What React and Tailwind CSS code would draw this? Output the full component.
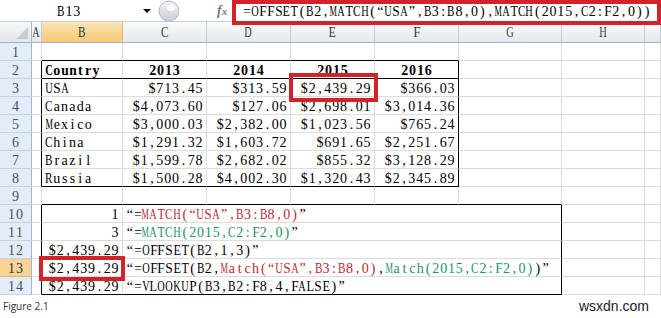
import React from 'react';

const SERIF = '"Liberation Serif", "DejaVu Serif", serif';
const CW = 7.85;

const RED = 'text-[#c0282d]';
const GREEN = 'text-[#23916a]';

// SimSun-like look: serif glyphs on a fixed-width advance, squeezed when too wide
let ctx = null;
function squeeze(ch, bold) {
  if (typeof document === 'undefined') return 1;
  if (!ctx) ctx = document.createElement('canvas').getContext('2d');
  ctx.font = `${bold ? 'bold ' : ''}14px "Liberation Serif"`;
  const w = ctx.measureText(ch).width;
  return w > CW - 0.4 ? (CW - 0.4) / w : 1;
}

function Mono({ text, bold }) {
  return (
    <span className="whitespace-nowrap">
      {Array.from(text).map((ch, i) => {
        const s = squeeze(ch, bold);
        return (
          <span key={i} className="inline-flex justify-center w-[7.85px]">
            <span className="inline-block" style={s < 1 ? { transform: `scaleX(${s})` } : undefined}>
              {ch}
            </span>
          </span>
        );
      })}
    </span>
  );
}

const data = {
  '2-2': { t: 'Country', b: true },
  '2-3': { t: '2013', b: true, a: 'c' },
  '2-4': { t: '2014', b: true, a: 'c' },
  '2-5': { t: '2015', b: true, a: 'c' },
  '2-6': { t: '2016', b: true, a: 'c' },
};

const table = [
  ['USA', '$713.45', '$313.59', '$2,439.29', '$366.03'],
  ['Canada', '$4,073.60', '$127.06', '$2,698.01', '$3,014.36'],
  ['Mexico', '$3,000.03', '$2,382.00', '$1,023.56', '$765.24'],
  ['China', '$1,291.32', '$1,603.72', '$691.65', '$2,251.67'],
  ['Brazil', '$1,599.78', '$2,682.02', '$855.32', '$3,128.29'],
  ['Russia', '$1,500.28', '$4,002.30', '$1,320.43', '$2,345.89'],
];
table.forEach((row, i) => {
  row.forEach((v, j) => {
    data[`${i + 3}-${j + 2}`] = { t: v, a: j === 0 ? 'l' : 'r' };
  });
});

const formulas = {
  10: { v: '1', f: [['“=', ''], ['MATCH(“USA”,B3:B8,0)', RED], ['”', '']] },
  11: { v: '3', f: [['“=', ''], ['MATCH(2015,C2:F2,0)', GREEN], ['”', '']] },
  12: { v: '$2,439.29', f: [['“=OFFSET(B2,1,3)”', '']] },
  13: {
    v: '$2,439.29',
    f: [
      ['“=OFFSET(B2,', ''],
      ['Match(“USA”,B3:B8,0)', RED],
      [',', ''],
      ['Match(2015,C2:F2,0)', GREEN],
      [')”', ''],
    ],
  },
  14: { v: '$2,439.29', f: [['“=VLOOKUP(B3,B2:F8,4,FALSE)”', '']] },
};

const colLetters = ['A', 'B', 'C', 'D', 'E', 'F', 'G', 'H', ''];

function borderClasses(r, c) {
  const rightBlack =
    (r >= 2 && r <= 8 && (c === 1 || c === 6)) || (r >= 10 && r <= 14 && (c === 1 || c === 3));
  const bottomBlack =
    (c >= 2 && c <= 6 && (r === 1 || r === 2 || r === 8)) ||
    (c >= 2 && c <= 7 && r === 9) ||
    ((c === 2 || c === 3) && r === 14);
  return [
    'border-r border-b',
    rightBlack ? 'border-r-black' : 'border-r-[#dadcdd]',
    bottomBlack ? 'border-b-black' : 'border-b-[#dadcdd]',
  ].join(' ');
}

function Cell({ r, c }) {
  const base = `${borderClasses(r, c)} flex items-end overflow-visible whitespace-nowrap text-[14px] leading-[14px] text-black`;
  if (r >= 10 && r <= 14 && c === 2) {
    return (
      <div className={`${base} justify-end pr-[3px]`} style={{ fontFamily: SERIF }}>
        <Mono text={formulas[r].v} />
      </div>
    );
  }
  if (r >= 10 && r <= 14 && c === 3) {
    return (
      <div className={`${base} col-span-5 pl-[3px]`} style={{ fontFamily: SERIF }}>
        {formulas[r].f.map(([t, cls], i) => (
          <span key={i} className={cls}>
            <Mono text={t} />
          </span>
        ))}
      </div>
    );
  }
  const d = data[`${r}-${c}`];
  const align = !d ? '' : d.a === 'c' ? 'justify-center' : d.a === 'r' ? 'justify-end pr-[3px]' : 'pl-[3px]';
  return (
    <div className={`${base} ${align} ${d && d.b ? 'font-bold' : ''}`} style={{ fontFamily: SERIF }}>
      {d ? <Mono text={d.t} bold={d.b} /> : null}
    </div>
  );
}

function FormulaBar() {
  return (
    <div className="h-[22px] flex items-center bg-white border-b border-[#c6ced9]" style={{ fontFamily: SERIF }}>
      <div className="w-[138px] text-center text-[14px] text-black pt-[2px]">
        <Mono text="B13" />
      </div>
      <svg width="10" height="6" viewBox="0 0 10 6" className="ml-[4px]">
        <path d="M1 1 L9 1 L5 5 Z" fill="#111" />
      </svg>
      <svg width="22" height="22" viewBox="0 0 22 22" className="ml-[5px]">
        <defs>
          <linearGradient id="g1" x1="0" y1="0" x2="0" y2="1">
            <stop offset="0" stopColor="#f2f4f6" />
            <stop offset="1" stopColor="#c9ced5" />
          </linearGradient>
        </defs>
        <ellipse cx="12" cy="11" rx="10" ry="10" fill="url(#g1)" stroke="#aeb6c0" strokeWidth="1" />
        <ellipse cx="14" cy="8" rx="4" ry="3" fill="#ffffff" opacity="0.9" />
      </svg>
      <div className="ml-[38px] text-[14px] italic font-bold text-[#7a7a7a] leading-none">
        f<span className="text-[11px]">x</span>
      </div>
      <div className="ml-[16px] text-[14px] text-black pt-[2px]">
        <Mono text="=OFFSET(B2,MATCH(“USA”,B3:B8,0),MATCH(2015,C2:F2,0))" />
      </div>
    </div>
  );
}

export default function App() {
  const rows = Array.from({ length: 14 }, (_, i) => i + 1);
  return (
    <div className="relative w-[661px] h-[318px] bg-white overflow-hidden">
      <FormulaBar />
      <div
        className="grid grid-cols-[32px_10px_81px_84px_84px_84px_84px_103px_83px_1fr] grid-rows-[21px_repeat(14,18px)]"
        style={{ fontFamily: SERIF }}
      >
        <div className="relative border-r border-b border-r-[#9eb6ce] border-b-[#9eb6ce] bg-gradient-to-b from-[#f6f7f9] to-[#e3e6ea]">
          <svg width="14" height="14" viewBox="0 0 14 14" className="absolute right-[2px] bottom-[2px]">
            <path d="M13 1 L13 13 L1 13 Z" fill="#c7cdd4" />
          </svg>
        </div>
        {colLetters.map((l, i) => (
          <div
            key={l + i}
            className={`flex items-center justify-center border-r border-b border-b-[#9eb6ce] text-[14px] pt-[1px] ${
              l === 'B'
                ? 'bg-gradient-to-b from-[#fbe5b8] to-[#f6c873] border-r-[#e3b66a] text-[#333]'
                : 'bg-gradient-to-b from-[#fafbfc] to-[#e4e7eb] border-r-[#c5cbd3] text-[#3b3b3b]'
            }`}
          >
            <Mono text={l} />
          </div>
        ))}
        {rows.map((r) => (
          <React.Fragment key={r}>
            <div
              className={`flex items-center justify-center border-r border-b border-r-[#9eb6ce] text-[14px] pt-[1px] ${
                r === 13
                  ? 'bg-[#f8d596] border-b-[#e2b56c] text-[#333]'
                  : 'bg-[#e4ecf7] border-b-[#c5d2e3] text-[#44536a]'
              }`}
            >
              <Mono text={String(r)} />
            </div>
            {[1, 2, 3, 4, 5, 6, 7, 8, 9].map((c) =>
              r >= 10 && c >= 4 && c <= 7 ? null : <Cell key={c} r={r} c={c} />
            )}
          </React.Fragment>
        ))}
      </div>
      <div className="h-[23px] flex items-center justify-between pl-[3px]">
        <span className="text-[10px] text-[#333]" style={{ fontFamily: '"Open Sans", sans-serif' }}>
          Figure 2.1
        </span>
        <span className="text-[14px] text-[#222] pr-[12px]" style={{ fontFamily: '"Liberation Sans", sans-serif' }}>
          wsxdn.com
        </span>
      </div>

      <div className="absolute left-[232px] top-0 w-[429px] h-[25px] border-[4px] border-[#d3222a]" />
      <div className="absolute left-[289px] top-[73px] w-[89px] h-[29px] border-[4px] border-[#d3222a]" />
      <div className="absolute left-[39px] top-[256px] w-[86px] h-[25px] border-[4px] border-[#d3222a]" />
    </div>
  );
}
